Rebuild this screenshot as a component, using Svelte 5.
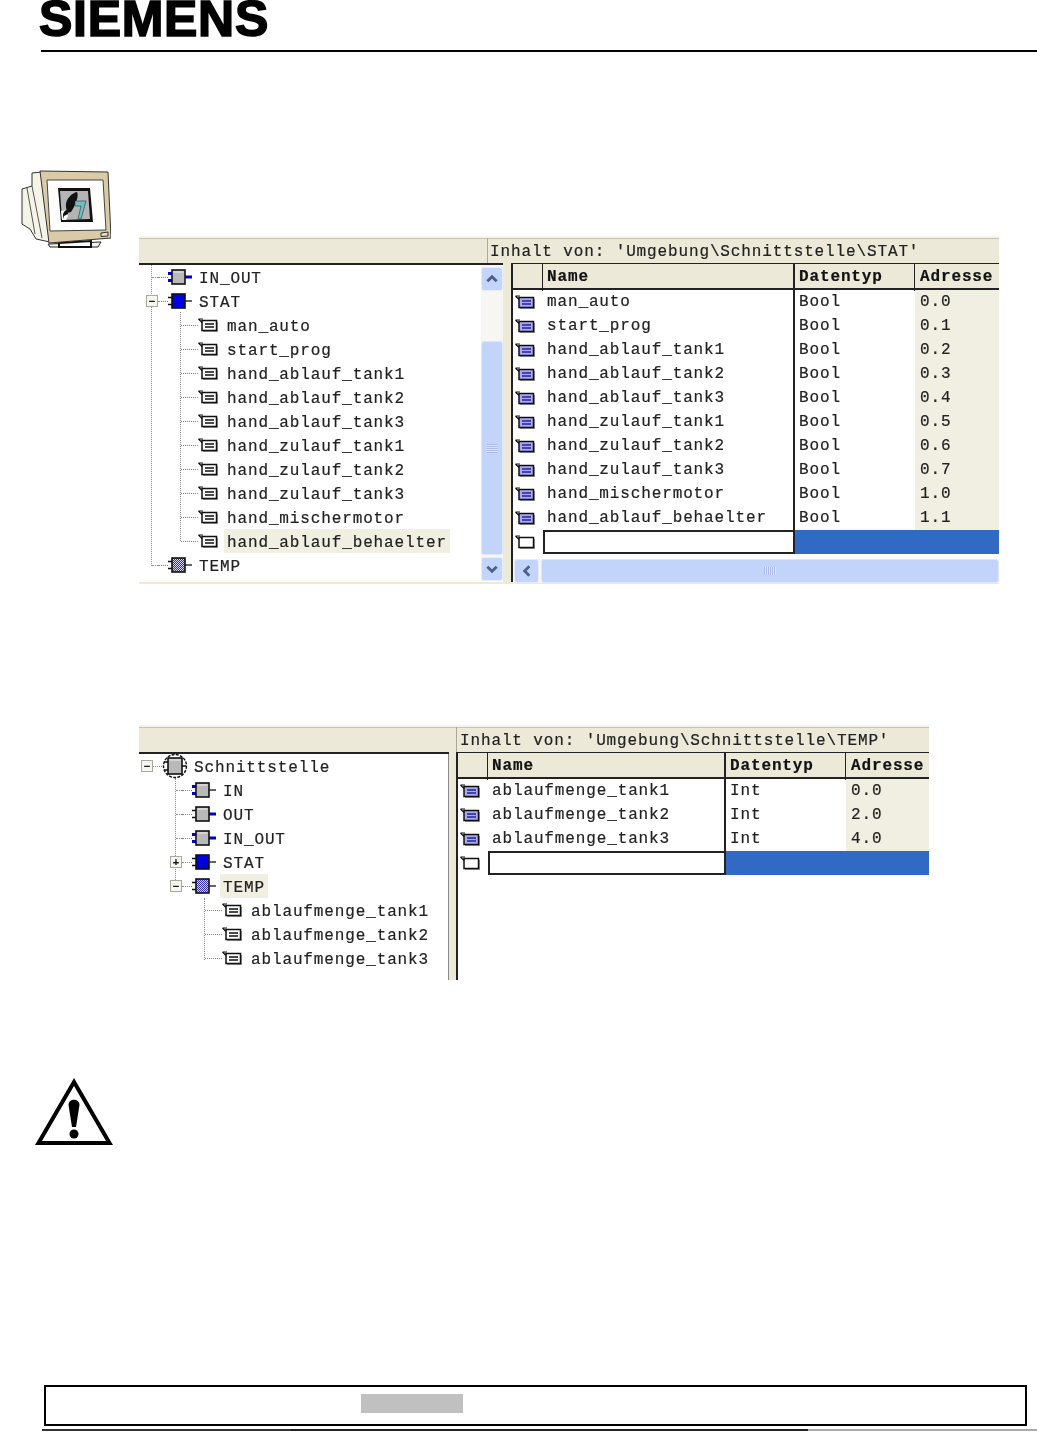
<script lang="ts">
  // Manual page: SIEMENS header, two STEP 7 interface screenshots, warning mark, footer box.
  type Node = { kind: string; label: string; x: number; exp?: string; active?: boolean };

  const tank = ['hand_ablauf_tank1', 'hand_ablauf_tank2', 'hand_ablauf_tank3', 'hand_zulauf_tank1', 'hand_zulauf_tank2', 'hand_zulauf_tank3', 'hand_mischermotor'];
  const statNames = ['man_auto', 'start_prog', ...tank, 'hand_ablauf_behaelter'];
  const statAddr = ['0.0', '0.1', '0.2', '0.3', '0.4', '0.5', '0.6', '0.7', '1.0', '1.1'];

  const statTree: Node[] = [
    { kind: 'inout', label: 'IN_OUT', x: 7 },
    { kind: 'stat', label: 'STAT', x: 7, exp: 'minus' },
    ...statNames.map((label, i) => ({ kind: 'var', label, x: 42, active: i === 9 })),
    { kind: 'temp', label: 'TEMP', x: 7 },
  ];

  const tempNames = ['ablaufmenge_tank1', 'ablaufmenge_tank2', 'ablaufmenge_tank3'];
  const tempTree: Node[] = [
    { kind: 'root', label: 'Schnittstelle', x: 2, exp: 'minus' },
    { kind: 'in', label: 'IN', x: 31 },
    { kind: 'out', label: 'OUT', x: 31 },
    { kind: 'inout', label: 'IN_OUT', x: 31 },
    { kind: 'stat', label: 'STAT', x: 31, exp: 'plus' },
    { kind: 'temp', label: 'TEMP', x: 31, exp: 'minus', active: true },
    ...tempNames.map((label) => ({ kind: 'var', label, x: 66 })),
  ];

  const statRows = statNames.map((name, i) => ({ name, type: 'Bool', addr: statAddr[i] }));
  const tempRows = tempNames.map((name, i) => ({ name, type: 'Int', addr: ['0.0', '2.0', '4.0'][i] }));
</script>

{#snippet blockIcon(kind: string)}
  {@const leftBlue = kind === 'in' || kind === 'inout'}
  {@const rightBlue = kind === 'out' || kind === 'inout'}
  <svg class="ico-block" viewBox="0 0 24 16" aria-hidden="true">
    <defs>
      <pattern id="dots-{kind}" width="2" height="2" patternUnits="userSpaceOnUse">
        <rect width="2" height="2" fill="#d8d8f0" />
        <rect width="1" height="1" fill="#3030b0" />
        <rect x="1" y="1" width="1" height="1" fill="#3030b0" />
      </pattern>
    </defs>
    <path d="M0 4.500h5M0 11.500h5" stroke={leftBlue ? '#0000c8' : '#111'} stroke-width={leftBlue ? 3 : 1.3} />
    <path d="M16 8h8" stroke={rightBlue ? '#0000c8' : '#111'} stroke-width={rightBlue ? 3 : 1.3} />
    <rect x="4" y="1" width="13" height="14" fill={kind === 'stat' ? '#0000e0' : kind === 'temp' ? `url(#dots-${kind})` : '#b9b9b9'} stroke="#111" stroke-width="1.6" />
    {#if kind !== 'stat' && kind !== 'temp'}
      <path d="M5.500 3h10" stroke="#eee" />
    {/if}
  </svg>
{/snippet}

{#snippet rootIcon()}
  <svg class="ico-root" viewBox="0 0 26 26" aria-hidden="true">
    <circle cx="13" cy="13" r="11.500" fill="none" stroke="#111" stroke-width="1.4" stroke-dasharray="3 1.2" />
    <path d="M2 9h4M2 17h4M20 13h4" stroke="#111" stroke-width="1.4" />
    <rect x="6" y="5" width="14" height="16" fill="#b9b9b9" stroke="#111" stroke-width="1.6" />
    <path d="M7.500 7h11" stroke="#eee" />
  </svg>
{/snippet}

{#snippet varIcon(tone: string)}
  <svg class="ico-var" viewBox="0 0 20 14" aria-hidden="true">
    <path d="M4 2.500H18.500V12.500H4z" fill={tone === 'blue' ? '#a9a9ee' : '#fff'} stroke="#111" stroke-width="1.5" />
    <path d="M0.500 1H5M0.500 1L4 4.500" stroke="#111" stroke-width="1.2" fill="none" />
    {#if tone !== 'empty'}
      <path d="M7 6h9M7 9h9" stroke={tone === 'blue' ? '#2020a0' : '#111'} stroke-width="1.4" />
    {/if}
    <path d="M5 13.500h14.500V4" stroke="#777" fill="none" />
  </svg>
{/snippet}

{#snippet tree(nodes: Node[])}
  {#each nodes as node (node.label)}
    <div class="row" class:leaf={node.kind === 'var'} class:rooted={node.kind === 'root'} style="--x: {node.x}px">
      {#if node.kind !== 'var'}
        {#if node.exp}
          <span class="exp">{node.exp === 'plus' ? '+' : '−'}</span>
        {:else}
          <span class="stub"></span>
        {/if}
      {/if}
      <span class="link"></span>
      {#if node.kind === 'var'}
        {@render varIcon('plain')}
      {:else if node.kind === 'root'}
        {@render rootIcon()}
      {:else}
        {@render blockIcon(node.kind)}
      {/if}
      <span class="label" class:active={node.active}>{node.label}</span>
    </div>
  {/each}
{/snippet}

{#snippet table(rows: { name: string; type: string; addr: string }[], cls: string)}
  <div class="table {cls}">
    <div class="tr head">
      <span class="c-ico"></span>
      <span class="c-name">Name</span>
      <span class="c-type">Datentyp</span>
      <span class="c-addr">Adresse</span>
    </div>
    {#each rows as r (r.name)}
      <div class="tr">
        <span class="c-ico">{@render varIcon('blue')}</span>
        <span class="c-name">{r.name}</span>
        <span class="c-type">{r.type}</span>
        <span class="c-addr">{r.addr}</span>
      </div>
    {/each}
    <div class="tr new">
      <span class="c-ico">{@render varIcon('empty')}</span>
      <span class="c-name"></span>
      <span class="c-sel"></span>
    </div>
  </div>
{/snippet}

{#snippet chevron(dir: string)}
  <svg class="chev {dir}" viewBox="0 0 12 12" aria-hidden="true">
    <path d="M2 8l4-4 4 4" fill="none" stroke="#4d6185" stroke-width="2.4" />
  </svg>
{/snippet}

<div class="page">
  <header class="top">
    <div class="logo">SIEMENS</div>
  </header>

  <main class="body">
    <div class="aside">
      <svg class="monitor" viewBox="0 0 90 78" aria-hidden="true">
        <path d="M1 19l10-3V3l10-1 8 70-14-3-6-10-8-5z" fill="#f4f4e8" stroke="#333" />
        <path d="M11 16l10 52M6 18l8 46" stroke="#555" fill="none" />
        <path d="M27 74l2 3h48l3-5z" fill="#f4f4e8" stroke="#222" />
        <path d="M38 73l0 4h32v-6z" fill="#fff" stroke="#111" stroke-width="2" />
        <path d="M19 1l68 1 3 66-62 5z" fill="#d9cba6" stroke="#333" />
        <path d="M26 10h56l3 50-56 1z" fill="#fff" stroke="#444" />
        <path d="M80 63l7-1v4l-7 .5z" fill="#e8dfc4" stroke="#333" />
        <path d="M37 18h32l3 34-32 0z" fill="#111" />
        <path d="M39 21h28l2 28-28 1z" fill="#b4b4b4" />
        <path d="M45 37c-1-8 6-14 11-15 2 4-1 10-3 15l-3 5-4 1z" fill="#111" />
        <path d="M40 41l5-1 2 6-2 4h-4z" fill="#fff" />
        <path d="M42 45c0-2 2-5 4-5l1 4-4 2-1 3z" fill="#111" />
        <path d="M54 31h11l-5 18h-3l3-13h-6z" fill="#68c2c8" stroke="#333" stroke-width=".6" />
      </svg>
    </div>

    <div class="figures">
      <section class="shot shot-stat">
        <div class="bar">
          <div class="bar-left"></div>
          <div class="bar-title">Inhalt von: 'Umgebung\Schnittstelle\STAT'</div>
        </div>
        <div class="panes">
          <div class="tree">
            <i class="guide" style="left: 12px; top: 0; height: 301px"></i>
            <i class="guide" style="left: 41px; top: 47px; height: 229px"></i>
            {@render tree(statTree)}
          </div>
          <div class="vscroll">
            <button class="sb-btn" type="button">{@render chevron('up')}</button>
            <div class="sb-gap"></div>
            <div class="sb-thumb"><span class="grip-h"></span></div>
            <button class="sb-btn" type="button">{@render chevron('down')}</button>
          </div>
          <div class="split"></div>
          <div class="list">
            {@render table(statRows, 'wide')}
            <div class="hscroll">
              <button class="sb-btn" type="button">{@render chevron('left')}</button>
              <div class="sb-thumb horiz"><span class="grip-v"></span></div>
            </div>
          </div>
        </div>
      </section>

      <section class="shot shot-temp">
        <div class="bar">
          <div class="bar-left"></div>
          <div class="bar-title">Inhalt von: 'Umgebung\Schnittstelle\TEMP'</div>
        </div>
        <div class="panes">
          <div class="tree">
            <i class="guide" style="left: 36px; top: 24px; height: 102px"></i>
            <i class="guide" style="left: 65px; top: 144px; height: 62px"></i>
            {@render tree(tempTree)}
          </div>
          <div class="split"></div>
          <div class="list">
            {@render table(tempRows, 'narrow')}
          </div>
        </div>
      </section>
    </div>
  </main>

  <svg class="warn" viewBox="0 0 78 67" aria-hidden="true">
    <path d="M39 4L3.500 65H74.500z" fill="#fff" stroke="#000" stroke-width="4" stroke-linejoin="miter" />
    <path d="M33.500 27c0-7 11-7 11 0l-3.500 22h-4z" fill="#000" />
    <circle cx="39" cy="56" r="4.500" fill="#000" />
  </svg>

  <footer class="foot">
    <div class="foot-box"><span class="foot-mark"></span></div>
    <div class="foot-rule"></div>
  </footer>
</div>

<style>
  :global(body) {
    background: #fff;
  }

  .page {
    width: 1037px;
    height: 1432px;
    overflow: hidden;
    font-family: "Liberation Mono", monospace;
    color: #222;
  }

  .top {
    height: 50px;
    margin-left: 41px;
    border-bottom: 2px solid #000;
  }
  .logo {
    font-family: "Liberation Sans", sans-serif;
    font-weight: 700;
    font-size: 50px;
    line-height: 38px;
    letter-spacing: 0.7px;
    color: #000;
    -webkit-text-stroke: 1.6px #000;
    margin-left: -2px;
  }

  .body {
    display: grid;
    grid-template-columns: 139px 860px;
    padding-top: 118px;
  }
  .aside {
    padding-left: 21px;
  }
  .monitor {
    display: block;
    width: 90px;
    height: 78px;
  }
  .figures {
    padding-top: 66px;
  }

  .shot {
    filter: blur(0.4px);
    -webkit-text-stroke: 0.2px currentColor;
  }
  .shot-stat {
    height: 348px;
    border-bottom: 2px solid #ece9d8;
    box-sizing: border-box;
  }
  .shot-temp {
    width: 790px;
    height: 255px;
    margin-top: 141px;
  }

  .bar {
    display: flex;
    height: 27px;
    background: #ece9d8;
    border-top: 2px solid #f6f4ea;
    box-sizing: border-box;
    box-shadow: inset 0 1px 0 #c9c4b2;
  }
  .shot-stat .bar-left {
    width: 344px;
  }
  .shot-temp .bar-left {
    width: 313px;
  }
  .bar-title {
    flex: 1;
    margin-left: 4px;
    padding-left: 2px;
    border-left: 1px solid #aca899;
    font-size: 16px;
    letter-spacing: 0.87px;
    line-height: 28px;
    white-space: pre;
  }
  .shot-temp .bar-title {
    padding-left: 3px;
  }

  .panes {
    display: flex;
    background: #fff;
  }
  .shot-stat .panes {
    height: 319px;
  }
  .shot-temp .panes {
    height: 228px;
  }

  .tree {
    position: relative;
    flex: none;
    border-top: 2px solid #222;
  }
  .shot-stat .tree {
    width: 342px;
  }
  .shot-temp .tree {
    width: 310px;
    box-shadow: inset -1px 0 0 #888;
  }
  .split {
    flex: none;
    background: #ece9d8;
  }
  .shot-stat .split {
    width: 8px;
  }
  .shot-temp .split {
    width: 7px;
  }
  .guide {
    position: absolute;
    width: 0;
    border-left: 1px dotted #8a8a8a;
  }

  .row {
    position: relative;
    display: flex;
    align-items: center;
    height: 24px;
    padding-left: var(--x);
    font-size: 16px;
    letter-spacing: 0.87px;
    white-space: nowrap;
  }
  .exp {
    position: relative;
    z-index: 1;
    flex: none;
    width: 12px;
    height: 12px;
    border: 1px solid #a8a89c;
    box-sizing: border-box;
    background: #f6f6f0;
    font: 700 11px/10px "Liberation Sans", sans-serif;
    letter-spacing: 0;
    text-align: center;
    color: #111;
  }
  .stub {
    flex: none;
    width: 6px;
    margin-left: 6px;
    border-top: 1px dotted #8a8a8a;
  }
  .link {
    flex: none;
    width: 10px;
    border-top: 1px dotted #8a8a8a;
  }
  .leaf .link {
    width: 17px;
  }
  .rooted .link {
    width: 9px;
  }
  .ico-block {
    flex: none;
    display: block;
    width: 24px;
    height: 16px;
    margin-right: 4px;
  }
  .ico-root {
    flex: none;
    display: block;
    width: 26px;
    height: 26px;
    margin-right: 3px;
  }
  .ico-var {
    flex: none;
    display: block;
    width: 20px;
    height: 14px;
  }
  .leaf .ico-var {
    margin-right: 6px;
  }
  .label {
    height: 24px;
    padding: 0 3px;
    line-height: 28px;
  }
  .label.active {
    background: #f1efe2;
  }

  .vscroll {
    flex: none;
    display: flex;
    flex-direction: column;
    width: 22px;
    height: 318px;
    box-sizing: border-box;
    padding-top: 2px;
    border-top: 2px solid #222;
    background: #f7f6f2;
  }
  .sb-btn {
    flex: none;
    display: grid;
    place-items: center;
    width: 22px;
    height: 24px;
    padding: 0;
    border: 1px solid #e6ecf8;
    border-radius: 3px;
    background: #c4d5fb;
  }
  .sb-gap {
    height: 50px;
    flex: none;
  }
  .sb-thumb {
    flex: 1;
    display: grid;
    place-items: center;
    margin-bottom: 2px;
    background: #c3d4fa;
    border: 1px solid #dde6fa;
    border-radius: 3px;
  }
  .sb-thumb.horiz {
    margin: 0 0 0 2px;
  }
  .grip-h {
    width: 10px;
    height: 9px;
    background: repeating-linear-gradient(#a9bcec 0 1px, #dde6fb 1px 2px);
  }
  .grip-v {
    width: 12px;
    height: 8px;
    background: repeating-linear-gradient(90deg, #a9bcec 0 1px, #dde6fb 1px 2px);
  }
  .chev {
    width: 14px;
    height: 14px;
  }
  .chev.down {
    transform: rotate(180deg);
  }
  .chev.left {
    transform: rotate(-90deg);
  }

  .list {
    flex: 1;
    display: flex;
    flex-direction: column;
    min-width: 0;
    border-left: 2px solid #222;
    border-top: 2px solid #222;
  }

  .tr {
    display: grid;
    height: 24px;
    font-size: 16px;
    letter-spacing: 0.87px;
    line-height: 24px;
    white-space: nowrap;
  }
  .wide .tr {
    grid-template-columns: 30px 252px 120px 1fr;
  }
  .narrow .tr {
    grid-template-columns: 30px 238px 120px 1fr;
  }
  .tr > span {
    padding-left: 4px;
    min-width: 0;
  }
  .tr .c-addr {
    padding-left: 5px;
  }
  .tr .c-ico {
    display: grid;
    align-items: center;
    justify-items: start;
    padding: 0 0 0 2px;
  }
  .c-name {
    border-right: 2px solid #222;
  }
  .c-addr {
    background: #f1efe2;
  }

  .head {
    background: #ece9d8;
    border-bottom: 2px solid #222;
    box-sizing: content-box;
    font-weight: 700;
    color: #111;
    line-height: 27px;
    margin-top: -1px;
  }
  .head .c-ico {
    border-right: 1px solid #222;
  }
  .head .c-type {
    border-right: 1px solid #222;
  }
  .head .c-addr {
    background: none;
  }

  .new .c-name {
    border: 2px solid #222;
  }
  .new .c-sel {
    grid-column: 3 / 5;
    background: #316ac5;
  }

  .hscroll {
    display: flex;
    height: 24px;
    margin-top: 5px;
    padding-left: 1px;
    background: #f7f6f2;
  }
  .hscroll .sb-btn {
    width: 25px;
  }

  .warn {
    display: block;
    width: 78px;
    height: 67px;
    margin: 98px 0 0 35px;
  }

  .foot {
    margin-top: 240px;
  }
  .foot-box {
    width: 983px;
    height: 41px;
    margin-left: 44px;
    box-sizing: border-box;
    padding: 7px 0 0 315px;
    border: 2px solid #000;
  }
  .foot-mark {
    display: block;
    width: 102px;
    height: 19px;
    background: #c0c0c0;
  }
  .foot-rule {
    height: 2px;
    margin: 3px 0 0 42px;
    background: linear-gradient(90deg, #333 0 25%, #222 25% 77%, #aaa 77%);
  }
</style>
